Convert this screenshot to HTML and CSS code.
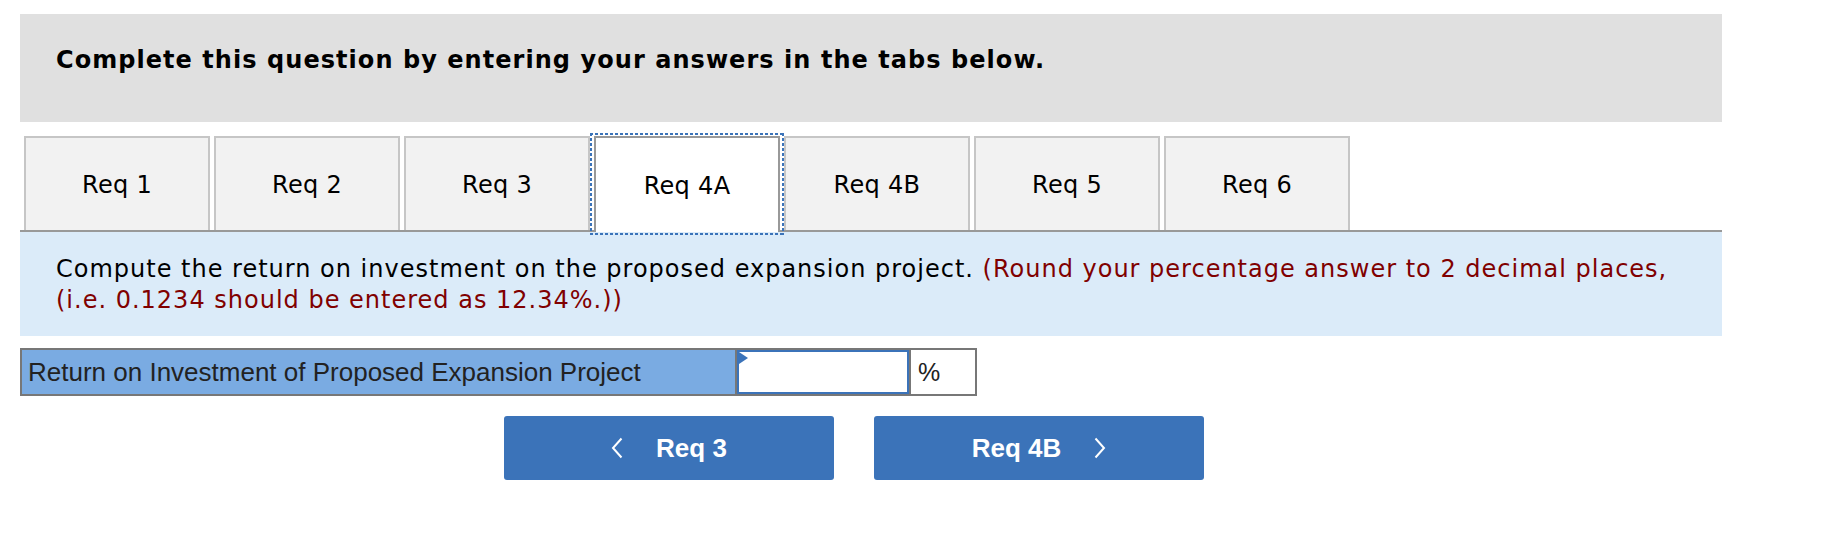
FILE: index.html
```
<!DOCTYPE html>
<html>
<head>
<meta charset="utf-8">
<link rel="stylesheet" href="styles.css">
</head>
<body>
<div class="page">
  <div class="banner">Complete this question by entering your answers in the tabs below.</div>
  <div class="tabs">
    <div class="tab">Req 1</div>
    <div class="tab">Req 2</div>
    <div class="tab">Req 3</div>
    <div class="tab active">Req 4A</div>
    <div class="tab">Req 4B</div>
    <div class="tab">Req 5</div>
    <div class="tab">Req 6</div>
  </div>
  <div class="prompt">Compute the return on investment on the proposed expansion project. <span class="note">(Round your percentage answer to 2 decimal places, (i.e. 0.1234 should be entered as 12.34%.))</span></div>
  <div class="answer-row">
    <div class="label-cell">Return on Investment of Proposed Expansion Project</div>
    <div class="input-cell"><input class="answer-input" type="text" value=""></div>
    <div class="unit-cell">%</div>
  </div>
  <div class="nav">
    <div class="nav-btn">
      <svg class="chev" width="12" height="22" viewBox="0 0 12 22"><polyline points="10.5,1.5 2,11 10.5,20.5" fill="none" stroke="#fff" stroke-width="2"/></svg>
      <span>Req 3</span>
    </div>
    <div class="nav-btn">
      <span>Req 4B</span>
      <svg class="chev" width="12" height="22" viewBox="0 0 12 22"><polyline points="1.5,1.5 10,11 1.5,20.5" fill="none" stroke="#fff" stroke-width="2"/></svg>
    </div>
  </div>
</div>
</body>
</html>
```
FILE: styles.css
```
* { box-sizing: border-box; }
html, body { margin: 0; padding: 0; background: #fff; }
.page {
  width: 1722px;
  padding-left: 20px;
  padding-top: 14px;
  font-family: "DejaVu Sans", Verdana, sans-serif;
  color: #000;
}
.banner {
  background: #e0e0e0;
  height: 108px;
  padding: 31px 0 0 36px;
  font-weight: bold;
  font-size: 24px;
  letter-spacing: 1.05px;
  line-height: 30px;
}
.tabs {
  margin-top: 14px;
  display: flex;
  padding-left: 4px;
  height: 96px;
  border-bottom: 2px solid #999;
}
.tab {
  width: 186px;
  height: 94px;
  margin-right: 4px;
  border: 2px solid #c6c6c6;
  border-bottom: none;
  background: #f2f2f2;
  display: flex;
  align-items: center;
  justify-content: center;
  font-size: 24px;
  letter-spacing: 0.3px;
  padding-top: 2px;
}
.tab.active {
  background: #fff;
  border-color: #999;
  height: 96px;
  position: relative;
}
.tab.active::after {
  content: "";
  position: absolute;
  left: -6px;
  right: -6px;
  top: -5px;
  bottom: -3px;
  background:
    repeating-linear-gradient(to right, #3b73b9 0 3px, transparent 3px 5px) left top / 100% 2px no-repeat,
    repeating-linear-gradient(to right, #3b73b9 0 3px, transparent 3px 5px) left bottom / 100% 2px no-repeat,
    repeating-linear-gradient(to bottom, #3b73b9 0 3px, transparent 3px 5px) left top / 2px 100% no-repeat,
    repeating-linear-gradient(to bottom, #3b73b9 0 3px, transparent 3px 5px) right top / 2px 100% no-repeat;
  pointer-events: none;
}
.prompt {
  background: #dbebf9;
  height: 104px;
  padding: 22px 36px 0 36px;
  font-size: 24px;
  letter-spacing: 1px;
  line-height: 31px;
}
.note { color: #800000; }
.answer-row {
  margin-top: 12px;
  display: flex;
  width: 957px;
  height: 48px;
  border: 2px solid #777;
}
.label-cell {
  width: 715px;
  background: #7aabe2;
  border-right: 2px solid #777;
  font-family: "Liberation Sans", Arial, sans-serif;
  font-size: 26px;
  color: #222;
  padding-left: 6px;
  display: flex;
  align-items: center;
}
.input-cell {
  width: 174px;
  border-right: 2px solid #777;
  position: relative;
}
.answer-input {
  width: 100%;
  height: 100%;
  border: 2px solid #3b73b9;
  margin: 0;
  padding: 0 6px;
  outline: none;
  font-size: 22px;
}
.input-cell::before {
  content: "";
  position: absolute;
  left: 2px;
  top: 2px;
  border-left: 9px solid #3b73b9;
  border-top: 6px solid transparent;
  border-bottom: 6px solid transparent;
}
.unit-cell {
  flex: 1;
  background: #fff;
  font-family: "Liberation Sans", Arial, sans-serif;
  font-size: 25px;
  color: #222;
  padding-left: 7px;
  display: flex;
  align-items: center;
}
.nav {
  margin-top: 20px;
  margin-left: 484px;
  display: flex;
  gap: 40px;
}
.nav-btn {
  width: 330px;
  height: 64px;
  background: #3b73b9;
  border-radius: 3px;
  display: flex;
  align-items: center;
  justify-content: center;
  gap: 33px;
  color: #fff;
  font-family: "Liberation Sans", Arial, sans-serif;
  font-weight: bold;
  font-size: 26px;
}
.chev { display: block; }
```
